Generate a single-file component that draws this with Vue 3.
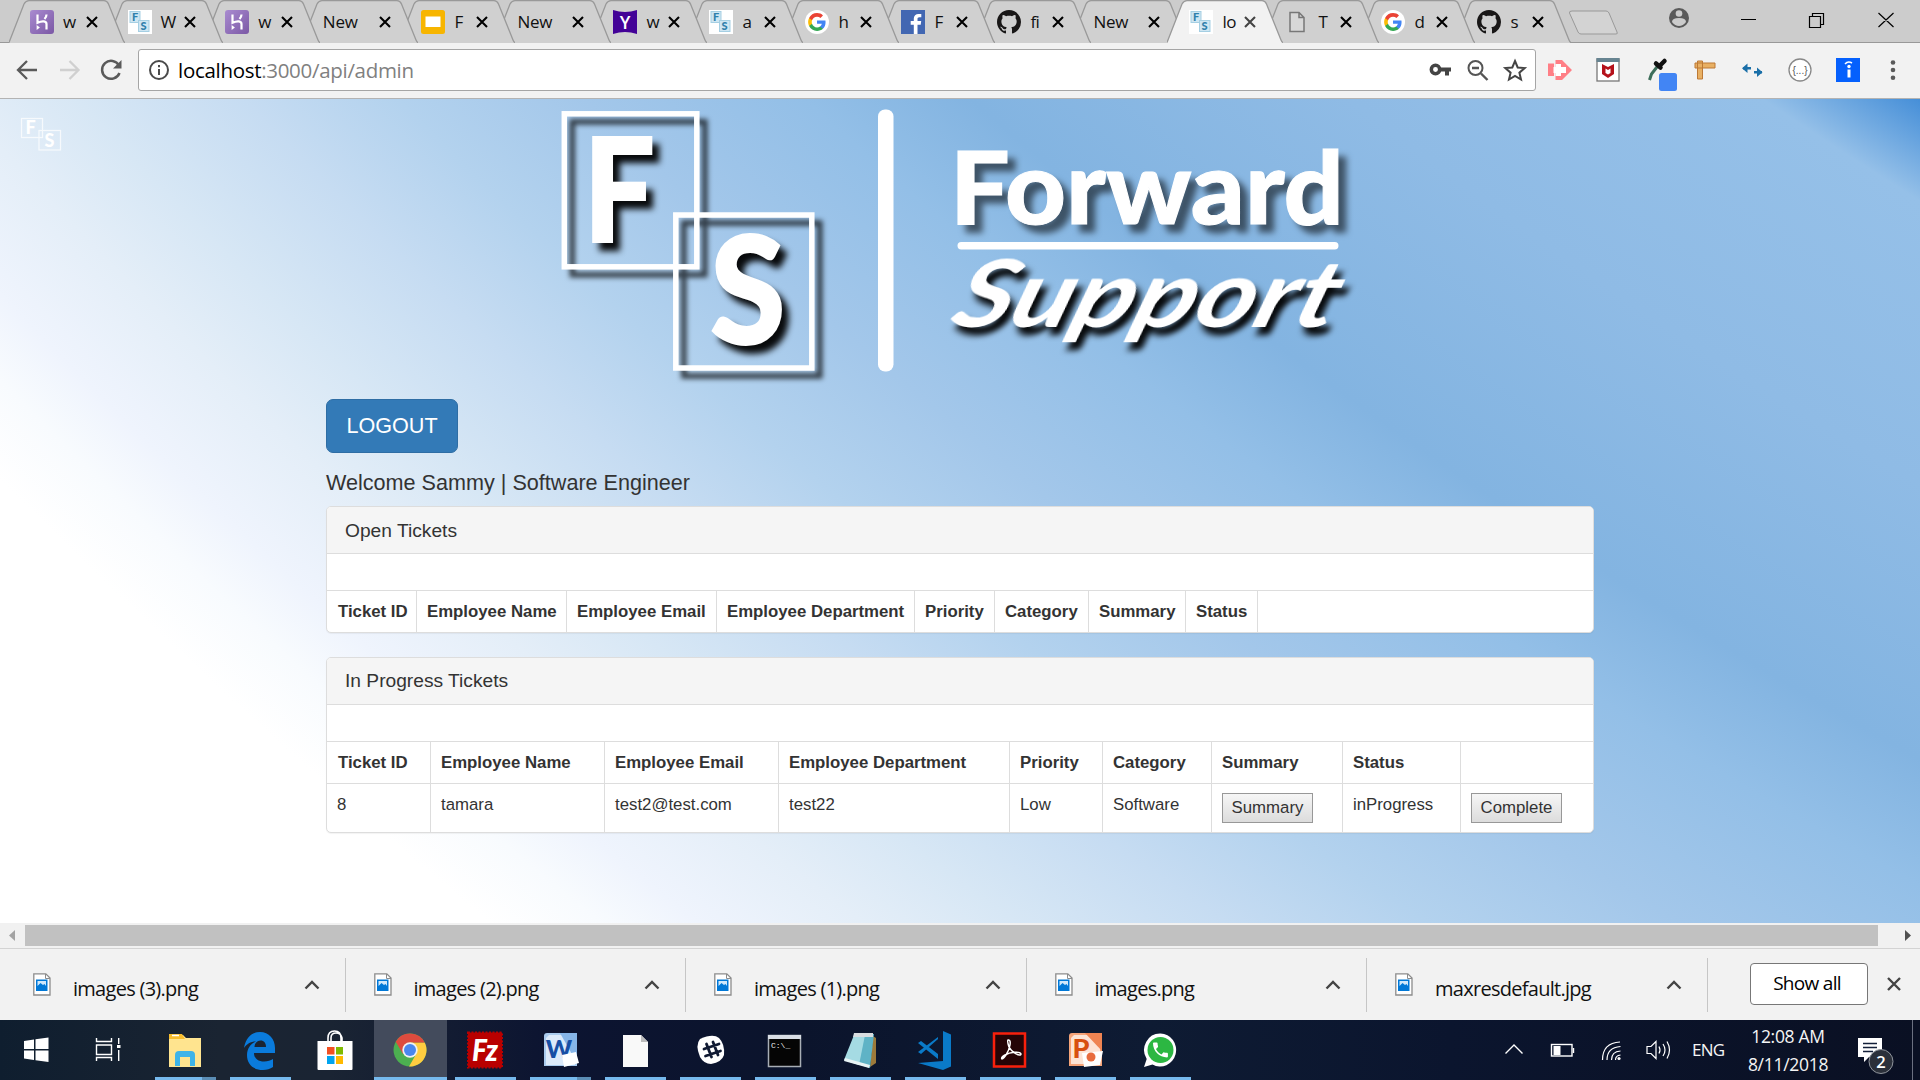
<script setup>
const fs = '<rect width="24" height="24" fill="#fff"/><g fill="#cfe6f2" stroke="#a5cfe3"><rect x="2" y="1.500" width="10" height="11"/><rect x="10.500" y="10.500" width="10.500" height="11"/></g><g font-family="Lato,sans-serif" font-weight="900" fill="#2f80ab" font-size="11"><text x="4" y="11">F</text><text x="12.500" y="20">S</text></g>'
const google = '<circle cx="12" cy="12" r="12" fill="#fff"/><g transform="translate(2.300 2.300) scale(.81)"><path fill="#4285F4" d="M22.560 12.250c0-.78-.07-1.530-.2-2.250H12v4.260h5.920c-.26 1.370-1.040 2.530-2.210 3.310v2.770h3.570c2.080-1.920 3.280-4.740 3.280-8.090z"/><path fill="#34A853" d="M12 23c2.970 0 5.460-.98 7.280-2.660l-3.570-2.770c-.98.66-2.230 1.060-3.710 1.060-2.860 0-5.290-1.930-6.160-4.530H2.180v2.840C3.990 20.530 7.700 23 12 23z"/><path fill="#FBBC05" d="M5.840 14.090c-.22-.66-.35-1.360-.35-2.090s.13-1.430.35-2.090V7.070H2.180C1.430 8.550 1 10.220 1 12s.43 3.450 1.180 4.930l2.850-2.220.81-.62z"/><path fill="#EA4335" d="M12 5.380c1.620 0 3.060.56 4.210 1.640l3.150-3.150C17.450 2.090 14.970 1 12 1 7.700 1 3.990 3.470 2.180 7.070l3.660 2.840c.87-2.600 3.300-4.530 6.160-4.530z"/></g>'
const github = '<path transform="scale(1.5)" fill="#191717" d="M8 0C3.580 0 0 3.580 0 8c0 3.540 2.290 6.530 5.470 7.590.4.07.55-.17.55-.38 0-.19-.01-.82-.01-1.490-2.010.37-2.530-.49-2.690-.94-.09-.23-.48-.94-.82-1.130-.28-.15-.68-.52-.01-.53.63-.01 1.080.58 1.230.82.72 1.210 1.870.87 2.330.66.07-.52.28-.87.51-1.070-1.780-.2-3.640-.89-3.640-3.950 0-.87.31-1.590.82-2.150-.08-.2-.36-1.020.08-2.120 0 0 .67-.21 2.200.82.64-.18 1.320-.27 2-.27s1.360.09 2 .27c1.530-1.040 2.200-.82 2.200-.82.44 1.100.16 1.920.08 2.120.51.56.82 1.270.82 2.150 0 3.070-1.870 3.750-3.650 3.950.29.25.54.73.54 1.480 0 1.070-.01 1.930-.01 2.200 0 .21.15.46.55.38A8.010 8.010 0 0 0 16 8c0-4.420-3.580-8-8-8z"/>'
const heroku = '<defs><linearGradient id="hk" x2="1" y2="1"><stop stop-color="#a98bd0"/><stop offset="1" stop-color="#7b58a5"/></linearGradient></defs><rect width="24" height="24" rx="3" fill="url(#hk)"/><path d="M7.500 4.500v8.300c5-2.300 9-1.800 9 1.200v5.500M16.500 4.500c0 1.800-.8 3.200-2 4.500" fill="none" stroke="#fff" stroke-width="2.200"/><path d="M6.600 15l3.300 2.400-3.300 2.500z" fill="#fff"/>'
const slides = '<rect width="24" height="24" rx="2.500" fill="#f7b500"/><rect x="4.500" y="6.500" width="15" height="10.500" fill="#fff"/>'
const yahoo = '<path d="M0 0q12 4 24 0v24q-12-4-24 0z" fill="#430297"/><text x="12" y="19" text-anchor="middle" font-family="Open Sans,sans-serif" font-size="18" font-weight="600" fill="#fff">Y</text>'
const facebook = '<rect width="24" height="24" fill="#4267b2"/><path d="M16.500 24v-9.300h3.200l.5-3.700h-3.700V9c0-1.100.4-1.800 1.900-1.800h1.900V4c-.4 0-1.500-.1-2.700-.1-2.900 0-4.800 1.700-4.800 4.700V11H9.700v3.700h3.100V24z" fill="#fff"/>'
const page = '<path d="M5 2.500h9l5 5v14H5zM14 2.500v5h5" fill="#d8d8d8" stroke="#777" stroke-width="1.500"/>'

const tabs = [
  { t: 'w', i: heroku }, { t: 'W', i: fs }, { t: 'w', i: heroku }, { t: 'New' },
  { t: 'F', i: slides }, { t: 'New' }, { t: 'w', i: yahoo }, { t: 'a', i: fs },
  { t: 'h', i: google }, { t: 'F', i: facebook }, { t: 'fi', i: github }, { t: 'New' },
  { t: 'lo', i: fs, on: true }, { t: 'T', i: page }, { t: 'd', i: google }, { t: 's', i: github }
]
const downloads = ['images (3).png', 'images (2).png', 'images (1).png', 'images.png', 'maxresdefault.jpg']

const columns = ['Ticket ID', 'Employee Name', 'Employee Email', 'Employee Department', 'Priority', 'Category', 'Summary', 'Status', '']

const apps = [
  { id: 'explorer', multi: true, svg: '<path d="M4 5h14l3 3h15v29H4z" fill="#ffe693"/><path d="M4 4h13l3 5H4z" fill="#f7bd2e"/><path d="M7 5.500h7" stroke="#fff" stroke-width="1.500"/><path d="M4 9h32v26H4z" fill="#ffe48f"/><path d="M10 36V25q0-4 4-4h12q4 0 4 4v11h-5v-9H15v9z" fill="#3fb4e8"/>' },
  { id: 'edge', svg: '<path fill-rule="evenodd" fill="#0a7bdc" d="M4 18C6 7 12 2 20 2c9 0 15 7 15 16v5H14c0 6 5 8.500 10 8.500 4 0 6.500-1 9-2.500v8C30 39 27 40 23 40 13 40 7 34 7 25c0-6 3-11 9-13.500C10 11.500 7 14 4 18zM14.500 17H26c0-4-2-6.500-5.500-6.500s-6 3-6 6.500z"/>' },
  { id: 'store', idle: true, svg: '<path d="M13 12V8q0-7 6.500-7T26 8v4M16 12V8q0-5 5-5t6 5v4" fill="none" stroke="#fff" stroke-width="1.600"/><path d="M2.500 11h35v28q0 1-1 1h-33q-1 0-1-1z" fill="#fff"/><path d="M12 17h7.500v7.500H12z" fill="#f25022"/><path d="M21 17h7v7.500h-7z" fill="#7fba00"/><path d="M12 26h7.500v8H12z" fill="#00a4ef"/><path d="M21 26h7v8h-7z" fill="#ffb900"/>' },
  { id: 'chrome', active: true, svg: '<circle cx="20" cy="20" r="16.500" fill="#4caf50"/><path d="M5.700 11.750A16.500 16.500 0 0 1 34.800 12.700H20L13 24z" fill="#dd4b3e"/><path d="M20 12.700h14.800A16.500 16.500 0 0 1 19 36.500l7.500-13z" fill="#ffcd40"/><circle cx="20" cy="20" r="7.700" fill="#f1f1f1"/><circle cx="20" cy="20" r="6" fill="#4a87ee"/>' },
  { id: 'filezilla', svg: '<rect x="3" y="2.500" width="34" height="35" fill="#b90000" stroke="#b90000" stroke-width="2" stroke-dasharray="2 1.500"/><text x="20" y="31" text-anchor="middle" font-family="Lato,sans-serif" font-style="italic" font-weight="900" font-size="30" fill="#fff" textLength="26" lengthAdjust="spacingAndGlyphs">Fz</text>' },
  { id: 'word', multi: true, svg: '<path d="M7 3h30v33H4V6q0-3 3-3z" fill="#a9cbee"/><path d="M9 5h26v30H6V8z" fill="#dceafa"/><path d="M20 3h17v30z" fill="#86b5e8"/><text x="19" y="28" text-anchor="middle" font-family="Lato,sans-serif" font-weight="900" font-size="25" fill="#174fa5">W</text><path d="M22 25l14-3 3 11-15 4z" fill="#fff"/>' },
  { id: 'document', svg: '<path d="M8 5h18l7 7v25H8z" fill="#f9f9f9"/><path d="M26 5v7h7z" fill="#bcbcbc"/>' },
  { id: 'slack', svg: '<path d="M10 9Q23 3 29 8q6 6 5 17-2 7-13 9-7 0-11-7-5-12 0-18z" fill="#fff"/><g stroke="#101a33" stroke-width="2.800" stroke-linecap="round"><path d="M16.500 14l5 13M23 12l5 13M14 19l15-5M15.500 26l15-5"/></g>' },
  { id: 'terminal', svg: '<rect x="3.500" y="5.500" width="32" height="31" fill="#050505" stroke="#a8aeb5" stroke-width="1.500"/><path d="M3 5h33v4H3z" fill="#d9dee5"/><text x="6" y="18" font-family="Liberation Mono,monospace" font-size="8" fill="#eee">C:\\_</text>' },
  { id: 'notepad', svg: '<path d="M33 6l3 2v25l-6 4z" fill="#9d7a3a"/><path d="M15 4h19l-4 34-13-4z" fill="#5fb3c6"/><path d="M14 5L4 30l15 5L25 5z" fill="#a5dbe3"/><path d="M14 3h19v4H13z" fill="#d8dde0"/><path d="M5 28l25 7-1 3L4 31z" fill="#e8f4f5"/>' },
  { id: 'code', svg: '<path d="M28 1l8 3.500v32L28 40 3 33l25-2z" fill="#0a7ac8"/><path d="M3 13l3-2 17 13V9L6 24l-3-2 20-15v22z" fill="#0a7ac8"/>' },
  { id: 'acrobat', svg: '<rect x="4" y="3.500" width="31" height="33" fill="#250406" stroke="#f8200c" stroke-width="2.500"/><path d="M18 10c4-1 2 9-2 15-5 7-6 3-1 0 5-3 15-4 16-1 0 3-9-1-12-7-1-3-2-6-1-7z" fill="none" stroke="#fff" stroke-width="1.500"/>' },
  { id: 'powerpoint', svg: '<path d="M7 3h30v33H4V6q0-3 3-3z" fill="#f5a479"/><path d="M9 5h26v29H6V8z" fill="#fde4d5"/><path d="M20 3h17v18z" fill="#ef8452"/><text x="16" y="28" text-anchor="middle" font-family="Lato,sans-serif" font-weight="900" font-size="27" fill="#d8500f">P</text><path d="M17 23l21-2-3 14-16 2z" fill="#fff"/><circle cx="26" cy="27" r="4.500" fill="#e86c3e"/>' },
  { id: 'whatsapp', svg: '<path d="M20.500 3.500a16 16.500 0 1 1-8 31L4 37l2.700-8A16 16.500 0 0 1 20.500 3.500z" fill="#fff"/><circle cx="20.500" cy="20" r="13" fill="#2cb742"/><path transform="translate(10.500 10) scale(.83)" d="M6.620 10.790c1.440 2.830 3.760 5.140 6.590 6.590l2.200-2.200c.27-.27.67-.36 1.020-.24 1.120.37 2.330.57 3.570.57.55 0 1 .45 1 1V20c0 .55-.45 1-1 1-9.390 0-17-7.610-17-17 0-.55.45-1 1-1h3.500c.55 0 1 .45 1 1 0 1.250.2 2.450.57 3.570.11.35.03.74-.25 1.020l-2.200 2.200z" fill="#fff"/>' }
]
</script>

<template>
  <div class="screen">
    <div class="tabstrip">
      <div class="tabs">
        <div v-for="(t, n) in tabs" :key="n" class="tab" :class="{ on: t.on, early: n < 4 }" :style="{ zIndex: t.on ? 30 : 20 - n }">
          <svg class="shape" width="116" height="43" viewBox="0 0 116 43">
            <path d="M0 43L0.500 42L15 4Q17 .7 20 .7H95Q98 .7 99.500 4L114 40Q115 42.500 116 43z" :fill="t.on ? '#f2f2f2' : '#d0d0d0'" />
            <path d="M0 42.500L15 4Q17 .7 20 .7H95Q98 .7 99.500 4L114 40Q115 42.500 116 42.500" fill="none" stroke="#999" stroke-width="1.300" />
          </svg>
          <svg v-if="t.i" class="fav" width="24" height="24" viewBox="0 0 24 24" v-html="t.i"></svg>
          <span class="title" :class="{ wide: !t.i }">{{ t.t }}</span>
          <svg class="x" width="12" height="12" viewBox="0 0 12 12"><path d="M1 1l10 10M11 1L1 11" :stroke="t.on ? '#444' : '#000'" stroke-width="2.100" /></svg>
        </div>
      </div>
      <svg class="newtab" width="52" height="26" viewBox="0 0 52 26"><path d="M4 1h34q2 0 3 2l8 19q1 2-1 2H13q-2 0-3-2L1.500 3Q1 1 4 1z" fill="#d3d3d3" stroke="#999" /></svg>
      <svg class="winctl" width="250" height="40" viewBox="1660 0 250 40">
        <circle cx="1679" cy="18" r="10" fill="#5a5a5a" />
        <circle cx="1679" cy="13.500" r="3.300" fill="#ccc" /><path d="M1672 22q0-4 7-4t7 4q-3 4-7 4t-7-4z" fill="#ccc" />
        <path d="M1741 19.500h15M1809.500 16.500h11v11h-11zM1812.500 16.500v-3h11v11h-3M1878.500 13l15 14M1893.500 13l-15 14" fill="none" stroke="#000" stroke-width="1.200" />
      </svg>
    </div>

    <div class="toolbar">
      <svg class="nav" width="130" height="40" viewBox="0 50 130 40" fill="none" stroke-width="2.300">
        <path d="M37 70H18.500M27 61l-9 9 9 9" stroke="#5a5a5a" />
        <path d="M60 70h18M69.500 61l9 9-9 9" stroke="#d0d0d0" />
        <path d="M119 65.500A9 9 0 1 0 119.500 73" stroke="#5a5a5a" stroke-width="2.500" /><path d="M121.500 60v8.500H113z" fill="#5a5a5a" />
      </svg>
      <div class="omnibox">
        <svg width="22" height="22" viewBox="0 0 22 22"><circle cx="11" cy="11" r="9" fill="none" stroke="#4a4a4a" stroke-width="2" /><path d="M11 10v6M11 6v2.200" stroke="#4a4a4a" stroke-width="2" /></svg>
        <span class="url">localhost<i>:3000/api/admin</i></span>
        <svg class="omni-actions" width="104" height="30" viewBox="1426 55 104 30">
          <circle cx="1435.500" cy="69.500" r="4.200" fill="none" stroke="#444" stroke-width="3.500" /><path d="M1439 67.500h12v4h-2v4h-4v-4h-6z" fill="#444" />
          <circle cx="1475.500" cy="68" r="7" fill="none" stroke="#555" stroke-width="2" /><path d="M1472 68h7M1481 73.500l6.500 6.500" stroke="#555" stroke-width="2.400" />
          <path d="M1515 61l2.700 6.500 7 .6-5.300 4.600 1.600 6.800-6-3.600-6 3.600 1.600-6.800-5.300-4.600 7-.6z" fill="none" stroke="#444" stroke-width="2" />
        </svg>
      </div>
      <svg class="extensions" width="370" height="44" viewBox="1540 50 370 44">
        <path d="M1548 63.500h6v12.500h-6zM1555.500 60h6.500l10 10-10 10h-6.500z" fill="#ff7f86" /><path d="M1555.500 64h5.500v3h5v6h-5v3h-5.500v-3h-2v-6h2z" fill="#fff" />
        <rect x="1597" y="59" width="22" height="22" fill="#fff" stroke="#777" stroke-width="1.300" /><path d="M1596.500 58h23v4h-23z" fill="#678491" /><path d="M1602 64l6 3 6-3v10l-6 4-6-4z" fill="#b5121b" /><path d="M1605.500 68.500l2.500 1.500 2.500-1.500v4.500l-2.500 1.500-2.500-1.500z" fill="#fff" />
        <path d="M1649.500 80l2-6 7-9" fill="none" stroke="#3d6e5a" stroke-width="3" /><path d="M1656 63.500l4.500 4M1660 65.500l4.500-4.500" stroke="#111" stroke-width="4.500" stroke-linecap="round" /><rect x="1659" y="73" width="18" height="18" rx="2.500" fill="#4285f4" />
        <path d="M1695 63h20v5h-20zM1697.500 61h5v18h-5z" fill="#e8b064" stroke="#bd7935" />
        <path d="M1743 67h8v2.500h-8zM1754 71h8v2.500h-8z" fill="#1a6fa8" /><path d="M1742 68.200l5.500-4.700v9.400zM1762.500 72.200l-5.500-4.700v9.400z" fill="#1a6fa8" />
        <circle cx="1800" cy="70" r="11" fill="#fff" stroke="#888" stroke-width="1.300" /><text x="1800" y="74" text-anchor="middle" font-size="10" font-family="Liberation Sans,sans-serif" fill="#555">{...}</text>
        <rect x="1836" y="58" width="24" height="24" fill="#0560fd" /><path d="M1845 64q3-3.500 7-1" stroke="#fff" stroke-width="1.500" fill="none" /><circle cx="1849" cy="66.500" r="1.700" fill="#fff" /><path d="M1849 69.500v8" stroke="#fff" stroke-width="3" />
        <g fill="#5a5a5a"><circle cx="1893" cy="62.500" r="2.300" /><circle cx="1893" cy="70" r="2.300" /><circle cx="1893" cy="77.700" r="2.300" /></g>
      </svg>
    </div>

    <main class="page">
      <header class="brand">
        <svg class="mini" width="42" height="36" viewBox="0 0 42 36">
          <g fill="none" stroke="#fff" stroke-width="1.200" opacity=".75"><rect x="1.500" y="1.500" width="21" height="19" /><rect x="19" y="13.500" width="21.500" height="19.500" /></g>
          <g fill="#fff" font-family="Lato,sans-serif" font-weight="900"><text x="5.500" y="17" font-size="18">F</text><text x="24.500" y="30" font-size="18">S</text></g>
        </svg>
        <svg class="logo" width="830" height="300" viewBox="540 99 830 300">
          <g class="dim" fill="none" stroke="#fff" stroke-width="5.500"><rect x="564.300" y="113.800" width="132.500" height="153" /><rect x="675.800" y="215" width="136" height="153" /></g>
          <g class="deep" fill="#fff" stroke="#fff" stroke-width="2" font-family="Lato, sans-serif" font-weight="900">
            <text transform="translate(583.500 242) scale(.87 1)" font-size="145">F</text>
            <text transform="translate(710 343.500) scale(.92 1)" font-size="149">S</text>
          </g>
          <rect x="878" y="109.500" width="15.500" height="262" rx="7" fill="#fff" />
          <text class="soft" x="950" y="224" font-family="Lato, sans-serif" font-weight="900" font-size="101" fill="#fff" stroke="#fff" textLength="394" lengthAdjust="spacingAndGlyphs">Forward</text>
          <rect x="957.500" y="242" width="381" height="7.500" rx="3.700" fill="#fff" />
          <text class="deep" transform="translate(948 327) skewX(-18)" font-family="Lato, sans-serif" font-style="italic" font-weight="700" font-size="92" fill="#fff" textLength="383" lengthAdjust="spacingAndGlyphs">Support</text>
        </svg>
      </header>

      <div class="content">
        <button class="logout">LOGOUT</button>
        <h4>Welcome Sammy | Software Engineer</h4>

        <section class="panel">
          <h3 class="lower">Open Tickets</h3>
          <div class="gap"></div>
          <div class="row open head"><div v-for="(c, n) in columns" :key="n">{{ c }}</div></div>
        </section>

        <section class="panel">
          <h3>In Progress Tickets</h3>
          <div class="gap"></div>
          <div class="row prog head"><div v-for="(c, n) in columns" :key="n">{{ c }}</div></div>
          <div class="row prog data">
            <div>8</div><div>tamara</div><div>test2@test.com</div><div>test22</div><div>Low</div><div>Software</div>
            <div><button class="act">Summary</button></div><div>inProgress</div><div><button class="act">Complete</button></div>
          </div>
        </section>
      </div>
    </main>

    <div class="scrollbar">
      <svg width="25" height="25" viewBox="0 0 25 25"><path d="M15 7v11l-6-5.500z" fill="#a3a3a3" /></svg>
      <div class="thumb"></div>
      <svg width="42" height="25" viewBox="0 0 42 25"><path d="M27 7v11l6-5.500z" fill="#505050" /></svg>
    </div>

    <div class="downloads">
      <div v-for="d in downloads" :key="d" class="dl">
        <svg width="18" height="23" viewBox="0 0 18 23"><path d="M.8.8h12l4.200 4.200v17H.8z" fill="#fff" stroke="#8c8c8c" stroke-width="1.300" /><path d="M12.500 1v4.500H17" fill="none" stroke="#8c8c8c" /><path d="M3 6.500h11.500v11.500H3z" fill="#0078d7" /><path d="M4.500 8h8.500v5l-1.500-2-1.500 1-2.500-2-3 3z" fill="#cfe8fb" /></svg>
        <span>{{ d }}</span>
        <svg class="up" width="16" height="10" viewBox="0 0 16 10"><path d="M1.500 8.500L8 2l6.500 6.500" fill="none" stroke="#444" stroke-width="2.400" /></svg>
      </div>
      <button class="showall">Show all</button>
      <svg class="dlx" width="16" height="16" viewBox="0 0 16 16"><path d="M2 2l12 12M14 2L2 14" stroke="#444" stroke-width="2.400" /></svg>
    </div>

    <div class="taskbar">
      <svg class="start" width="150" height="60" viewBox="0 1020 150 60">
        <path d="M24 1041l10-1.500v9.500H24zM35.500 1039.200l13-1.700v11.500h-13zM24 1050.500h10v9.500l-10-1.500zM35.500 1050.500h13v11.500l-13-1.700z" fill="#fff" />
        <g fill="none" stroke="#fff" stroke-width="1.400"><path d="M96.500 1038v3.500h15v-3.500M96.500 1061v-3.500h15v3.500M96.500 1045h15v9.500h-15zM118.700 1038v6M118.700 1050v11" /></g><path d="M117 1045h3.500v3H117z" fill="#fff" />
      </svg>
      <div class="app" v-for="a in apps" :key="a.id" :class="{ active: a.active, idle: a.idle, multi: a.multi }">
        <svg width="40" height="41" viewBox="0 0 40 41" v-html="a.svg"></svg>
      </div>
      <div class="tray">
        <svg width="186" height="60" viewBox="1500 1020 186 60" fill="none" stroke="#fff" stroke-width="1.400">
          <path d="M1505.500 1053.500l8.500-8.500 8.500 8.500" />
          <rect x="1551.500" y="1044.500" width="20.500" height="11.500" /><path d="M1573.500 1048v5" /><path d="M1553.500 1046h7v9h-7z" fill="#fff" stroke="none" />
          <path d="M1602.500 1060q0-17 17.500-18M1607 1060q0-12.500 13.500-13.500M1611.500 1060q0-8.500 9-9M1615.500 1060q0-4.500 5-5" stroke-width="1.200" /><circle cx="1619" cy="1058.500" r="1.600" fill="#fff" stroke="none" />
          <path d="M1647 1046.500h4l5-5v17l-5-5h-4zM1659 1046.500q2 3.500 0 7M1663 1044q4 6 0 12M1667 1041.500q5 8.500 0 17" stroke-width="1.200" />
        </svg>
        <span class="lang">ENG</span>
        <div class="clock"><span>12:08 AM</span><span class="date">8/11/2018</span></div>
        <svg class="note" width="46" height="60" viewBox="1850 1020 46 60">
          <path d="M1858 1038h24v19h-13l-5 5v-5h-6z" fill="#fff" /><path d="M1863 1043.500h14M1863 1047.500h14M1863 1051.500h10" stroke="#14203a" stroke-width="1.300" />
          <circle cx="1881" cy="1061.500" r="12" fill="#2b303a" stroke="#90959c" /><text x="1881" y="1067.500" text-anchor="middle" font-family="Open Sans,sans-serif" font-weight="600" font-size="16.500" fill="#fff">2</text>
        </svg>
        <i class="desk"></i>
      </div>
    </div>
  </div>
</template>

<style>
body { margin: 0; overflow: hidden; }
</style>

<style scoped>
* { box-sizing: border-box; }
.screen { width: 1920px; height: 1080px; display: flex; flex-direction: column; overflow: hidden; font-family: "Open Sans", "Noto Sans", sans-serif; background: #f2f2f2; }
svg { flex: none; display: block; }
.tabstrip { height: 43px; flex: none; background: #ccc; display: flex; border-bottom: 1px solid #999; position: relative; }
.tabs { display: flex; padding-left: 9px; height: 43px; }
.tab { width: 96px; height: 43px; position: relative; display: flex; align-items: center; padding-left: 22px; }
.tab.early { width: 97.6px; padding-left: 21px; }
.shape { position: absolute; left: 0; top: 0; }
.fav { position: relative; }
.title { position: relative; margin-left: 9px; white-space: nowrap; font-size: 17px; line-height: 24px; color: #111; letter-spacing: -.5px; }
.title.wide { margin-left: 0; letter-spacing: -.2px; }
.x { position: absolute; left: 77px; top: 16px; }
.newtab { margin: 10px 0 0 17px; }
.winctl { margin-left: auto; margin-right: 10px; }
.toolbar { height: 56px; flex: none; background: #f2f2f2; display: flex; align-items: flex-start; border-bottom: 1px solid #b3b3b3; }
.nav { margin-top: 7px; }
.omnibox { margin: 6px 0 0 8px; width: 1398px; height: 42px; background: #fff; border: 1px solid #a5a5a5; border-radius: 3px; display: flex; align-items: center; padding-left: 9px; }
.url { margin-left: 8px; font-size: 20.500px; letter-spacing: -.3px; color: #000; white-space: nowrap; }
.url i { font-style: normal; color: #808080; }
.omni-actions { margin-left: auto; margin-right: 5px; }
.extensions { margin: 7px 0 0 4px; }
.page { height: 824px; flex: none; overflow: hidden; background: radial-gradient(circle at 4620px -4234px, #468fd8 5022px, #95c0e8 5108px, #8fbbe5 5350px, #83b4e1 5590px, #93bfe7 5700px, #a3c7ea 5850px, #b3d2ee 5980px, #c6dcf2 6090px, #d7e7f5 6210px, #e4eef8 6300px, #eff4fd 6400px, #f8fbfe 6460px, #fff 6530px); }
.brand { display: flex; height: 300px; }
.mini { margin: 18px 0 0 20px; }
.logo { margin-left: 478px; }
.dim { filter: drop-shadow(8px 8px 2.500px rgba(0, 0, 0, .7)); }
.deep { filter: drop-shadow(7px 8px 3px rgba(0, 0, 0, .95)); }
.soft { filter: drop-shadow(8px 8px 3px rgba(0, 0, 0, .55)); }
.content { width: 1268px; margin-left: 326px; font-family: "Liberation Sans", Arial, sans-serif; color: #333; }
.logout { display: block; width: 132px; height: 54px; padding: 0; font: 21.600px "Liberation Sans", Arial, sans-serif; color: #fff; background: #337ab7; border: 1px solid #2e6da4; border-radius: 7px; }
h4 { margin: 17px 0 11px; font-size: 21.600px; line-height: 25px; font-weight: 400; white-space: nowrap; }
.panel { background: #fff; border: 1px solid #ddd; border-radius: 5px; margin-bottom: 24px; box-shadow: 0 1px 1px rgba(0, 0, 0, .05); overflow: hidden; }
h3 { margin: 0; height: 47px; padding: 12px 18px; font-size: 19.200px; line-height: 22px; font-weight: 400; background: #f5f5f5; border-bottom: 1px solid #ddd; }
h3.lower { padding-top: 13px; }
.gap { height: 36px; }
.row { display: grid; border-top: 1px solid #ddd; font-size: 16.800px; line-height: 24px; }
.row > div { border-right: 1px solid #ddd; padding: 9px 10px 0; white-space: nowrap; height: 41px; }
.row > div:last-child { border-right: 0; }
.open { grid-template-columns: 90px 150px 150px 198px 80px 94px 97px 72px 1fr; }
.prog { grid-template-columns: 104px 174px 174px 231px 93px 109px 131px 118px 1fr; }
.head { font-weight: 700; }
.row.head > div:first-child { padding-left: 11px; }
.row.data > div { height: 48px; }
.act { display: block; width: 91px; height: 30px; padding: 0; font: 16.800px "Liberation Sans", Arial, sans-serif; color: #333; background: linear-gradient(#f6f6f6, #dcdcdc); border: 1px solid #989898; border-radius: 0; }
.scrollbar { height: 25px; flex: none; background: #f1f1f1; display: flex; align-items: center; }
.thumb { flex: 1; height: 21px; background: #c1c1c1; }
.downloads { height: 72px; flex: none; border-top: 1px solid #d3d3d3; background: #f2f2f2; display: flex; align-items: flex-start; padding: 9px 0 0 5px; }
.dl { width: 340.500px; height: 54px; border-right: 1.500px solid #c6c6c6; display: flex; padding: 15px 25px 0 28px; }
.dl span { margin: 3px 0 0 22px; line-height: 26px; font-size: 20px; letter-spacing: -.72px; color: #111; white-space: nowrap; }
.up { margin: 7px 0 0 auto; }
.showall { margin: 5px 0 0 42px; width: 118px; height: 42px; padding: 0 3px 2px 0; background: #fff; border: 1px solid #777; border-radius: 4px; font: 19px "Open Sans", "Noto Sans", sans-serif; letter-spacing: -.7px; color: #000; }
.dlx { margin: 18px 0 0 18px; }
.taskbar { height: 60px; flex: none; display: flex; background: linear-gradient(90deg, #0f1e2f, #1a2432 220px, #1a2433 330px, #0c1431 550px, #0b142c 800px, #0e1b33 1150px, #0b152e 1450px, #0a1023 1920px); }
.app { width: 75px; height: 60px; display: flex; justify-content: center; padding-top: 10px; position: relative; padding-right: 2px; }
.start { margin-right: -2px; }
.app::after { content: ""; position: absolute; left: 7px; bottom: 0; width: 61px; height: 3px; background: #76b9ed; }
.app.multi::after { background: linear-gradient(90deg, #76b9ed 47px, #5b8db5 47px); }
.app.idle::after { display: none; }
.app.active { background: linear-gradient(#434b5c, #434b5c) 1px 0 / 73px 60px no-repeat; }
.app.active::after { left: 1px; width: 73px; }
.tray { margin-left: auto; display: flex; color: #f5f5f5; }
.lang { width: 45px; padding: 17px 0 0 6px; font-size: 17px; line-height: 25px; letter-spacing: -.7px; }
.clock { width: 114px; display: flex; flex-direction: column; text-align: center; font-size: 17.500px; letter-spacing: -.3px; line-height: 28px; padding-top: 2px; }
.note { margin-left: 5px; }
.desk { width: 1px; height: 60px; margin: 0 7px 0 16px; background: #6b7080; }
</style>
